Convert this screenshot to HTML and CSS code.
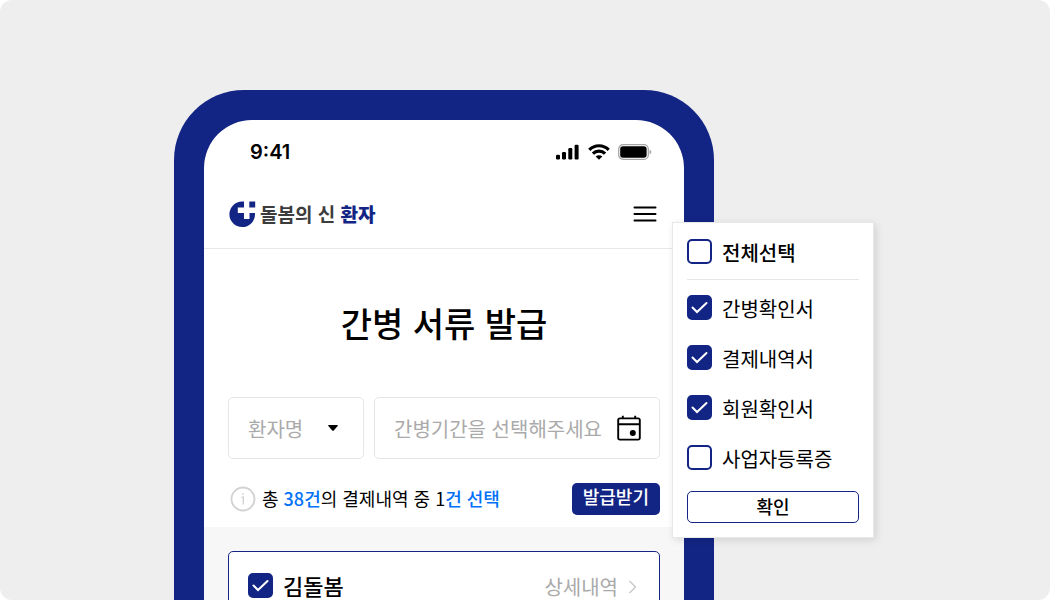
FILE: index.html
```html
<!DOCTYPE html>
<html lang="ko">
<head>
  <meta charset="UTF-8" />
  <meta name="viewport" content="width=device-width, initial-scale=1.0"/>
  <title>간병 서류 발급</title>
  <link rel="stylesheet" href="styles.css">
</head>
<body>
  <div class="scene">
    <div class="stage">
      <div class="phone">
        <div class="screen">
          <div class="status-bar">
            <span class="time">9:41</span>
            <div class="status-icons">
              <svg width="24" height="16" viewBox="0 0 24 16">
                <rect x="0" y="10.8" width="4" height="4.7" rx="1.2"/>
                <rect x="6" y="8" width="4" height="7.5" rx="1.2"/>
                <rect x="12.3" y="4" width="4" height="11.5" rx="1.2"/>
                <rect x="18.6" y=".8" width="4" height="14.7" rx="1.2"/>
              </svg>
              <svg width="22" height="16" viewBox="0 0 22 16">
                <g fill="none" stroke="#000" stroke-width="3.2">
                  <path d="M1.3 5.8a13.6 13.6 0 0 1 19.4 0"/>
                  <path d="M4.9 9.7a8.6 8.6 0 0 1 12.2 0"/>
                </g>
                <path d="M11 15.8 7.7 12.5a4.7 4.7 0 0 1 6.6 0z"/>
              </svg>
              <svg width="34" height="16" viewBox="0 0 34 16">
                <rect x="0.7" y="0.7" width="29.6" height="14.6" rx="4.4" fill="none" stroke="#a6a6a6" stroke-width="1.3"/>
                <rect x="2.2" y="2.2" width="26.4" height="11.6" rx="2.8"/>
                <path d="M31.6 5.5v5c1-.4 1.7-1.4 1.7-2.5s-.7-2.1-1.7-2.5z" fill="#a6a6a6"/>
              </svg>
            </div>
          </div>

          <header class="top-bar">
            <a href="#" class="logo">
              <svg width="27" height="27" viewBox="0 0 27 27" fill="#132584">
                <path d="M15 .5v6H8.8v5.5H15v6h5.5V12h5.5v1.5A12.8 12.8 0 1 1 13.2 .5z"/>
                <rect x="20.3" y=".5" width="5.9" height="6"/>
              </svg>
              <span>돌봄의 신 <b>환자</b></span>
            </a>
            <button class="icon-btn" aria-label="메뉴">
              <svg width="24" height="18" viewBox="0 0 24 18" fill="none" stroke="#000" stroke-width="2" stroke-linecap="round">
                <path d="M1.5 2.5h21M1.5 9h21M1.5 15.5h21"/>
              </svg>
            </button>
          </header>

          <main>
            <h1>간병 서류 발급</h1>

            <div class="filters">
              <div class="field name-field">
                <select aria-label="환자명">
                  <option>환자명</option>
                </select>
                <svg class="caret" width="10" height="6" viewBox="0 0 10 6"><path d="M.8 0h8.4q1.2 0 .4 1L6 5.3q-1 1-2 0L.4 1Q-.4 0 .8 0z"/></svg>
              </div>
              <div class="field date-field">
                <input type="text" aria-label="간병기간" placeholder="간병기간을 선택해주세요">
                <button class="icon-btn" aria-label="달력">
                  <svg width="24" height="26" viewBox="0 0 24 26">
                    <path d="M2.8 3.4h18.4a1.6 1.6 0 0 1 1.6 1.6v18a1.6 1.6 0 0 1-1.6 1.6H2.8A1.6 1.6 0 0 1 1.2 23V5a1.6 1.6 0 0 1 1.6-1.6zM1.2 9.3h21.6M5.8 .8v3M18.2 .8v3" fill="none" stroke="#000" stroke-width="1.9"/>
                    <circle cx="15.8" cy="18" r="3"/>
                  </svg>
                </button>
              </div>
            </div>

            <div class="summary">
              <svg width="26" height="26" viewBox="0 0 26 26" fill="none" stroke="#d2d2d2">
                <circle cx="13" cy="13" r="11.5" stroke-width="1.8"/>
                <path d="M11.5 11.3H13.3v7.2M13 7.2v1.8" stroke-width="1.4"/>
              </svg>
              <p>총 <em>38건</em>의 결제내역 중 1<em>건 선택</em></p>
              <button class="issue-btn">발급받기</button>
            </div>
          </main>

          <section class="results">
            <div class="card">
              <label class="check person">
                <input type="checkbox" checked>
                <span>김돌봄</span>
              </label>
              <a href="#" class="detail">상세내역
                <svg width="10" height="14" viewBox="0 0 10 14" fill="none" stroke="#ccc" stroke-width="1.6"><path d="M1.5 1l6 6-6 6"/></svg>
              </a>
            </div>
          </section>
        </div>
      </div>

      <form class="popup">
        <label class="check all"><input type="checkbox"><span>전체선택</span></label>
        <div class="options">
          <label class="check"><input type="checkbox" checked><span>간병확인서</span></label>
          <label class="check"><input type="checkbox" checked><span>결제내역서</span></label>
          <label class="check"><input type="checkbox" checked><span>회원확인서</span></label>
          <label class="check"><input type="checkbox"><span>사업자등록증</span></label>
        </div>
        <button type="button" class="confirm-btn">확인</button>
      </form>
    </div>
  </div>
</body>
</html>
```
FILE: styles.css
```css
* {
  box-sizing: border-box;
}

body {
  margin: 0;
  background: #fff;
  color: #000;
  font-family: "Noto Sans CJK KR", sans-serif;
  font-size: 20px;
  line-height: 30px;
}

button,
input,
select {
  font: inherit;
  color: inherit;
}

button {
  cursor: pointer;
}

a {
  text-decoration: none;
}

svg {
  display: block;
  flex-shrink: 0;
}

.scene {
  height: 100vh;
  padding: 90px 20px 0;
  overflow: hidden;
  border-radius: 12px;
  background: #eee;
}

.stage {
  position: relative;
  max-width: 702px;
  margin: 0 auto;
}

/* phone */
.phone {
  max-width: 540px;
  padding: 30px;
  border-radius: 70px;
  background: #132584;
}

.screen {
  overflow: hidden;
  border-radius: 48px;
  background: #fff;
}

.status-bar {
  display: flex;
  align-items: center;
  justify-content: space-between;
  height: 60px;
  padding: 4px 32px 0 46px;
}

.time {
  font-family: Inter, sans-serif;
  font-size: 20px;
  font-weight: 600;
}

.status-icons {
  display: flex;
  gap: 8px;
}

.top-bar {
  display: flex;
  align-items: center;
  justify-content: space-between;
  height: 69px;
  padding: 0 27px 0 25px;
  border-bottom: 1px solid #e8e8e8;
}

.logo {
  display: flex;
  align-items: center;
  gap: 4px;
  color: #3c3c3c;
  font-size: 19px;
  font-weight: 700;
}

.logo b {
  color: #132584;
}

.icon-btn {
  padding: 0;
  border: 0;
  background: none;
}

main {
  padding: 48px 24px 12px;
}

h1 {
  margin: 0 0 48px;
  font-size: 34px;
  font-weight: 500;
  line-height: 52px;
  text-align: center;
}

.filters {
  display: flex;
  gap: 10px;
}

.field {
  display: flex;
  align-items: center;
  height: 62px;
  border: 1px solid #e6e6e6;
  border-radius: 5px;
  color: #aaa;
}

.name-field {
  position: relative;
  width: 136px;
}

.name-field select {
  width: 100%;
  height: 100%;
  padding: 2px 19px 0;
  border: 0;
  background: none;
  appearance: none;
}

.caret {
  position: absolute;
  right: 25px;
  pointer-events: none;
}

.date-field {
  flex: 1;
  padding: 0 18px 0 19px;
}

.date-field input {
  flex: 1;
  min-width: 0;
  padding: 2px 0 0;
  border: 0;
  background: none;
}

.date-field input::placeholder {
  color: #aaa;
}

.summary {
  display: flex;
  align-items: center;
  gap: 6px;
  margin-top: 24px;
  padding-left: 2px;
}

.summary p {
  flex: 1;
  margin: 0;
  padding-bottom: 2px;
  font-size: 18px;
}

.summary em {
  color: #0071f8;
  font-style: normal;
  font-weight: 500;
}

.issue-btn {
  height: 32px;
  padding: 0 11px 6px;
  border: 0;
  border-radius: 5px;
  background: #132584;
  color: #fff;
  font-size: 18px;
  font-weight: 500;
  line-height: 24px;
}

.results {
  padding: 24px;
  background: #f7f7f7;
}

.card {
  display: flex;
  justify-content: space-between;
  min-height: 160px;
  padding: 18px 21px 18px 19px;
  border: 1px solid #132584;
  border-radius: 5px;
  background: #fff;
}

.detail {
  display: flex;
  align-items: center;
  align-self: flex-start;
  gap: 10px;
  padding-top: 2px;
  color: #aaa;
}

/* checkboxes */
.check {
  display: flex;
  align-items: center;
  align-self: flex-start;
  gap: 10px;
}

.check input {
  flex-shrink: 0;
  width: 25px;
  height: 25px;
  margin: 0;
  border: 2px solid #132584;
  border-radius: 5px;
  background: #fff;
  appearance: none;
}

.check input:checked {
  background: #132584 url("data:image/svg+xml,%3Csvg xmlns='http://www.w3.org/2000/svg' viewBox='0 0 25 25'%3E%3Cpath d='M5.5 12.5l4.5 4.5L19.5 8' fill='none' stroke='white' stroke-width='2' stroke-linecap='round'/%3E%3C/svg%3E") border-box center / 25px;
}

.person {
  font-size: 22px;
  font-weight: 500;
}

/* document picker */
.popup {
  position: absolute;
  top: 132px;
  right: 2px;
  width: 202px;
  padding: 12px 14px 14px;
  border: 1px solid #e8e8e8;
  background: #fff;
  box-shadow: 2px 2px 8px rgba(0, 0, 0, 0.12);
}

.popup .check span {
  padding-top: 3px;
}

.all {
  padding-bottom: 11px;
  border-bottom: 1px solid #e6e6e6;
  font-weight: 500;
}

.options {
  display: grid;
  gap: 17px;
  margin: 11px 0 17px;
}

.confirm-btn {
  display: block;
  width: 100%;
  height: 32px;
  padding: 0 0 2px;
  border: 1px solid #132584;
  border-radius: 5px;
  background: #fff;
  font-size: 18px;
  font-weight: 500;
  line-height: 28px;
}
```
